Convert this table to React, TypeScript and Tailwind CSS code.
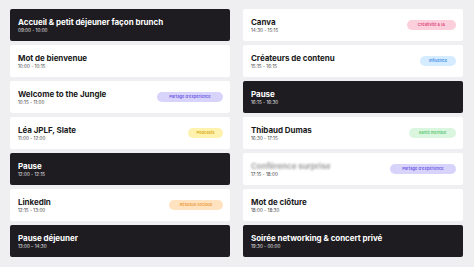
type Tag = "ia" | "influence" | "partage" | "podcast" | "sante" | "reseaux";

type Slot = {
  title: string;
  time: string;
  dark?: boolean;
  tag?: Tag;
  blur?: boolean;
};

const tags: Record<Tag, { label: string; cls: string }> = {
  ia: { label: "Créativité & IA", cls: "bg-[#fbcfdc] text-[#e0467c] w-[49px]" },
  influence: { label: "Influence", cls: "bg-[#d5ebff] text-[#3d8ee6] w-[36px]" },
  partage: { label: "Partage d'expérience", cls: "bg-[#d8d3fb] text-[#6b58e4] w-[66px]" },
  podcast: { label: "Podcasts", cls: "bg-[#fff2ae] text-[#d8ad12] w-[35px]" },
  sante: { label: "Santé mentale", cls: "bg-[#dbf6df] text-[#5cc877] w-[47px]" },
  reseaux: { label: "Réseaux sociaux", cls: "bg-[#ffe2c0] text-[#ee9d3c] w-[54px]" },
};

const left: Slot[] = [
  { title: "Accueil & petit déjeuner façon brunch", time: "09:00 - 10:00", dark: true },
  { title: "Mot de bienvenue", time: "10:00 - 10:15" },
  { title: "Welcome to the Jungle", time: "10:15 - 11:00", tag: "partage" },
  { title: "Léa JPLF, Slate", time: "11:00 - 12:00", tag: "podcast" },
  { title: "Pause", time: "12:00 - 12:15", dark: true },
  { title: "LinkedIn", time: "12:15 - 13:00", tag: "reseaux" },
  { title: "Pause déjeuner", time: "13:00 – 14:30", dark: true },
];

const right: Slot[] = [
  { title: "Canva", time: "14:30 - 15:15", tag: "ia" },
  { title: "Créateurs de contenu", time: "15:15 - 16:15", tag: "influence" },
  { title: "Pause", time: "16:15 - 16:30", dark: true },
  { title: "Thibaud Dumas", time: "16:30 - 17:15", tag: "sante" },
  { title: "Conférence surprise", time: "17:15 - 18:00", tag: "partage", blur: true },
  { title: "Mot de clôture", time: "18:00 - 18:30" },
  { title: "Soirée networking & concert privé", time: "19:30 - 00:00", dark: true },
];

function Card({ slot }: { slot: Slot }) {
  const tag = slot.tag ? tags[slot.tag] : null;
  return (
    <div
      className={`h-[32px] rounded-[2px] flex items-center justify-between pl-[8px] pr-[7px] ${
        slot.dark ? "bg-[#1e1b21] text-white" : "bg-white text-[#1a1a1a]"
      }`}
    >
      <div className="flex flex-col">
        <span
          className={`text-[8px] leading-[10px] font-bold tracking-[-0.05px] ${
            slot.blur ? "blur-[1.2px] text-[#a0a0a0]" : ""
          }`}
        >
          {slot.title}
        </span>
        <span className={`text-[4.6px] leading-[7px] ${slot.dark ? "text-[#e8e8e8]" : "text-[#444]"}`}>
          {slot.time}
        </span>
      </div>
      {tag && (
        <span
          className={`h-[10px] rounded-full flex items-center justify-center text-[4px] font-semibold ${tag.cls}`}
        >
          {tag.label}
        </span>
      )}
    </div>
  );
}

export default function App() {
  return (
    <div
      className="w-[474px] h-[267px] bg-[#efeff1] pt-[9px] pl-[10px] pr-[11px] grid grid-cols-2 gap-x-[13px] content-start"
      style={{ fontFamily: "Inter, 'Open Sans', sans-serif" }}
    >
      <div className="flex flex-col gap-[4px]">
        {left.map((s, i) => (
          <Card key={i} slot={s} />
        ))}
      </div>
      <div className="flex flex-col gap-[4px]">
        {right.map((s, i) => (
          <Card key={i} slot={s} />
        ))}
      </div>
    </div>
  );
}
